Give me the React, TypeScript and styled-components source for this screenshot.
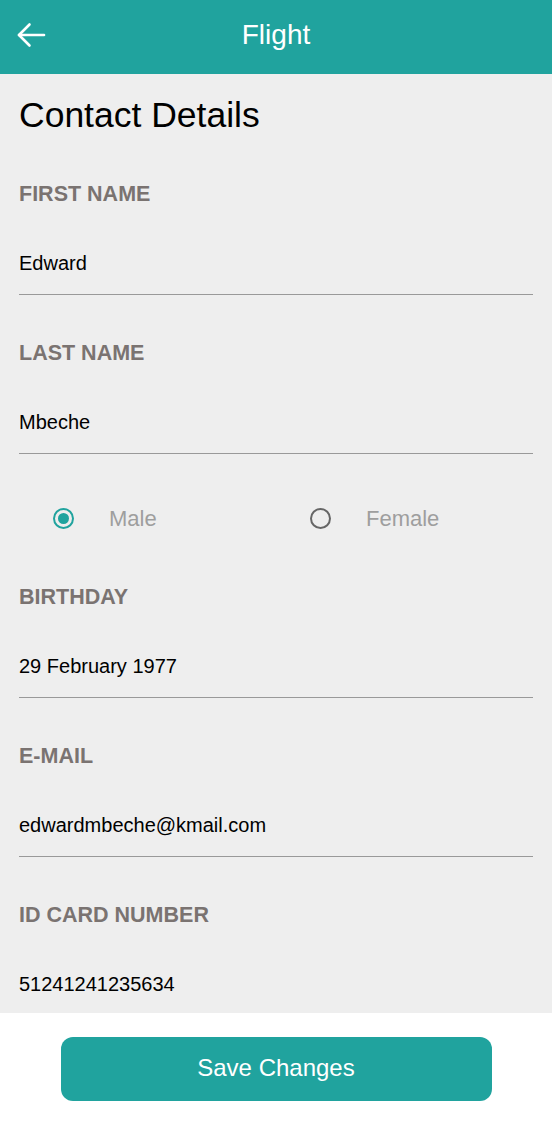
import React from "react";
import styled, { createGlobalStyle } from "styled-components";

const Global = createGlobalStyle`
  html, body { margin: 0; padding: 0; }
  body { font-family: "Liberation Sans", Arial, sans-serif; background: #ffffff; }
  * { box-sizing: border-box; }
`;

const Page = styled.div`
  width: 552px;
  height: 1122px;
  display: flex;
  flex-direction: column;
  overflow: hidden;
`;

const Header = styled.header`
  height: 74px;
  flex: none;
  background: #20a39e;
  display: flex;
  align-items: center;
  justify-content: center;
  position: relative;
  padding-bottom: 4px;
`;

const BackButton = styled.button`
  position: absolute;
  left: 14px;
  top: 20px;
  width: 34px;
  height: 30px;
  border: none;
  background: transparent;
  padding: 0;
  display: flex;
  align-items: center;
  justify-content: center;
`;

const Title = styled.h1`
  margin: 0;
  font-size: 28px;
  font-weight: 400;
  color: #ffffff;
  line-height: 1;
`;

const Scroll = styled.main`
  flex: 1;
  background: #eeeeee;
  overflow: hidden;
  padding: 21px 19px 0;
`;

const Heading = styled.h2`
  margin: 0;
  font-size: 35.5px;
  font-weight: 400;
  color: #000;
  line-height: 40px;
`;

const Stack = styled.div<{ $top?: number }>`
  display: flex;
  flex-direction: column;
  gap: 46px;
  padding-top: ${(p) => p.$top ?? 0}px;
`;

const Field = styled.div`
  display: flex;
  flex-direction: column;
`;

const Label = styled.div`
  font-size: 21.5px;
  font-weight: 700;
  color: #7a7371;
  line-height: 24px;
  height: 24px;
`;

const Value = styled.div`
  font-size: 20px;
  color: #000;
  line-height: 24px;
  padding-top: 45px;
  padding-bottom: 19px;
  border-bottom: 1.5px solid #999;
`;

const RadioRow = styled.div`
  display: grid;
  grid-template-columns: 257px 1fr;
  padding: 54px 0 56px 34px;
`;

const RadioOption = styled.label`
  display: flex;
  align-items: center;
  gap: 35px;
  height: 21px;
`;

const Circle = styled.span<{ $checked?: boolean }>`
  flex: none;
  width: 21px;
  height: 21px;
  border-radius: 50%;
  border: 2px solid ${(p) => (p.$checked ? "#20a39e" : "#666")};
  display: flex;
  align-items: center;
  justify-content: center;
  &::after {
    content: "";
    width: 11px;
    height: 11px;
    border-radius: 50%;
    background: ${(p) => (p.$checked ? "#20a39e" : "transparent")};
  }
`;

const RadioText = styled.span`
  font-size: 22px;
  line-height: 24px;
  color: #9e9e9e;
`;

const Footer = styled.footer`
  height: 109px;
  flex: none;
  background: #ffffff;
  display: flex;
  justify-content: center;
  padding-top: 24px;
`;

const SaveButton = styled.button`
  width: 431px;
  height: 64px;
  background: #20a39e;
  border: none;
  border-radius: 12px;
  color: #ffffff;
  font-family: "Liberation Sans", Arial, sans-serif;
  font-size: 24px;
  padding-bottom: 3px;
`;

export default function App() {
  return (
    <Page>
      <Global />
      <Header>
        <BackButton aria-label="Back">
          <svg width="30" height="26" viewBox="0 0 30 26" fill="none" stroke="#fff" strokeWidth="2.6" strokeLinecap="round" strokeLinejoin="round">
            <path d="M28 13H3" />
            <path d="M13.5 2.5L3 13l10.5 10.5" />
          </svg>
        </BackButton>
        <Title>Flight</Title>
      </Header>
      <Scroll>
        <Heading>Contact Details</Heading>
        <Stack $top={47}>
          <Field>
            <Label>FIRST NAME</Label>
            <Value>Edward</Value>
          </Field>
          <Field>
            <Label>LAST NAME</Label>
            <Value>Mbeche</Value>
          </Field>
        </Stack>
        <RadioRow>
          <RadioOption>
            <Circle $checked />
            <RadioText>Male</RadioText>
          </RadioOption>
          <RadioOption>
            <Circle />
            <RadioText>Female</RadioText>
          </RadioOption>
        </RadioRow>
        <Stack>
          <Field>
            <Label>BIRTHDAY</Label>
            <Value>29 February 1977</Value>
          </Field>
          <Field>
            <Label>E-MAIL</Label>
            <Value>edwardmbeche@kmail.com</Value>
          </Field>
          <Field>
            <Label>ID CARD NUMBER</Label>
            <Value>51241241235634</Value>
          </Field>
        </Stack>
      </Scroll>
      <Footer>
        <SaveButton>Save Changes</SaveButton>
      </Footer>
    </Page>
  );
}
